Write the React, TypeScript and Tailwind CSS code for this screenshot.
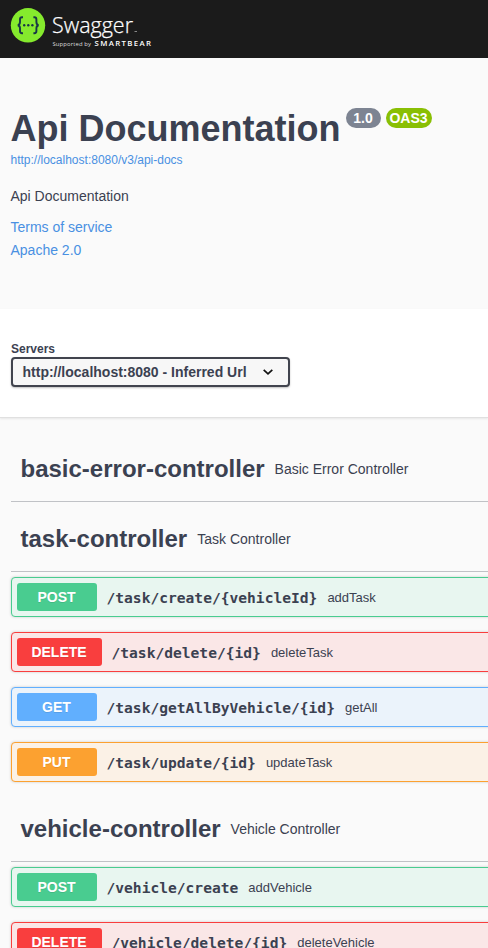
const sans = 'font-["Liberation_Sans",Arial,sans-serif]';
const mono = 'font-["DejaVu_Sans_Mono",monospace]';

type Method = 'POST' | 'DELETE' | 'GET' | 'PUT';

const styles: Record<Method, { row: string; badge: string }> = {
  POST: { row: 'border-[#49cc90] bg-[#e8f6f0]', badge: 'bg-[#49cc90] w-20' },
  DELETE: { row: 'border-[#f93e3e] bg-[#fae7e7]', badge: 'bg-[#f93e3e] w-[85px]' },
  GET: { row: 'border-[#61affe] bg-[#ebf3fb]', badge: 'bg-[#61affe] w-20' },
  PUT: { row: 'border-[#fca130] bg-[#fbf1e6]', badge: 'bg-[#fca130] w-20' },
};

function Operation({ method, path, summary }: { method: Method; path: string; summary: string }) {
  const s = styles[method];
  return (
    <div className={`mb-[15px] flex h-10 w-[600px] items-center rounded border px-[5px] shadow-[0_0_3px_rgba(0,0,0,0.19)] ${s.row}`}>
      <span
        className={`flex h-7 shrink-0 items-center justify-center rounded-[3px] pr-px text-sm font-bold text-white [text-shadow:0_1px_0_rgba(0,0,0,0.1)] ${s.badge}`}
      >
        {method}
      </span>
      <span className={`ml-[9.5px] whitespace-nowrap pt-0.5 text-[14.6px] leading-5 font-bold ${mono}`}>{path}</span>
      <span className="ml-2.5 whitespace-nowrap pt-0.5 text-[13px] leading-5">{summary}</span>
    </div>
  );
}

function Tag({ name, description }: { name: string; description: string }) {
  return (
    <h3 className="mb-[5px] flex h-[65px] items-center border-b border-[#3b4151]/30 pl-[9.5px]">
      <span className="text-2xl leading-8 font-bold">{name}</span>
      <span className="ml-2.5 text-sm">{description}</span>
    </h3>
  );
}

function Logo() {
  return (
    <svg width="160" height="58" viewBox="0 0 160 58" className="block">
      <circle cx="28" cy="25.3" r="17.2" fill="#85ea2d" />
      <g fill="none" stroke="#173647" strokeWidth="1.9">
        <path d="M23 17.2h-1c-1.5 0-2 .8-2 2.2v2.7c0 1.9-.5 2.8-2.2 3.1 1.7.3 2.2 1.2 2.2 3.1V31c0 1.4.5 2.2 2 2.2h1" />
        <path d="M33.4 17.2h1c1.5 0 2 .8 2 2.2v2.7c0 1.9.5 2.8 2.2 3.1-1.7.3-2.2 1.2-2.2 3.1V31c0 1.4-.5 2.2-2 2.2h-1" />
      </g>
      <g fill="#173647">
        <circle cx="24.2" cy="25.2" r="1.2" />
        <circle cx="28.3" cy="25.2" r="1.2" />
        <circle cx="32.4" cy="25.2" r="1.2" />
      </g>
      <text x="52" y="32.5" textLength="81" lengthAdjust="spacingAndGlyphs" fill="#fff" fontFamily="Open Sans" fontWeight="300" fontSize="22.5" stroke="#fff" strokeWidth="0.25">
        Swagger
      </text>
      <path d="M134.5 31.5h2.5" stroke="#888" strokeWidth="1" />
      <text x="52.5" y="46" textLength="38.5" fill="#ddd" fontFamily="Open Sans" fontSize="5.9">
        Supported by
      </text>
      <text x="94.5" y="45.8" textLength="56.5" fill="#fff" fontFamily="Open Sans" fontWeight="600" fontSize="7.8">
        SMARTBEAR
      </text>
    </svg>
  );
}

export default function App() {
  return (
    <div className={`h-[948px] w-[488px] overflow-hidden bg-[#fafafa] text-[#3b4151] ${sans}`}>
      <header className="h-[58px] bg-[#1b1b1b]">
        <Logo />
      </header>
      <section className="h-[251px] pt-[50px] pl-[10.5px]">
        <div className="flex h-10 items-start">
          <h2 className="mt-px text-[36px] leading-10 font-bold">Api Documentation</h2>
          <span className="ml-[5px] flex h-5 w-[35px] items-center justify-center rounded-full bg-[#7d8492] text-sm font-bold text-white">1.0</span>
          <span className="ml-[5px] flex h-5 w-[46px] items-center justify-center rounded-full bg-[#89bf04] text-sm font-bold text-white">OAS3</span>
        </div>
        <a className="mt-1 block text-xs leading-4 text-[#4990e2]">http://localhost:8080/v3/api-docs</a>
        <p className="mt-[18px] text-sm leading-5">Api Documentation</p>
        <a className="mt-[11px] block text-sm leading-5 text-[#4990e2]">Terms of service</a>
        <a className="mt-[3px] block text-sm leading-5 text-[#4990e2]">Apache 2.0</a>
      </section>
      <section className="h-[109px] border-b border-[#e0e0e0] bg-white pt-8 pl-[11px] shadow-[0_1px_2px_rgba(0,0,0,0.08)]">
        <label className="block text-xs leading-4 font-bold">Servers</label>
        <div className="flex h-[30px] w-[279px] items-center justify-between rounded border-2 border-[#41444e] bg-[#f7f7f7] pr-[15px] pl-[9.5px] shadow-[0_1px_2px_rgba(0,0,0,0.25)]">
          <span className="text-sm font-bold">http://localhost:8080 - Inferred Url</span>
          <svg width="10" height="6" viewBox="0 0 10 6" fill="none" stroke="#111" strokeWidth="1.7">
            <path d="M.7.8L5 4.8 9.3.8" />
          </svg>
        </div>
      </section>
      <main className="pt-[19px] pl-[11px]">
        <Tag name="basic-error-controller" description="Basic Error Controller" />
        <Tag name="task-controller" description="Task Controller" />
        <Operation method="POST" path="/task/create/{vehicleId}" summary="addTask" />
        <Operation method="DELETE" path="/task/delete/{id}" summary="deleteTask" />
        <Operation method="GET" path="/task/getAllByVehicle/{id}" summary="getAll" />
        <Operation method="PUT" path="/task/update/{id}" summary="updateTask" />
        <Tag name="vehicle-controller" description="Vehicle Controller" />
        <Operation method="POST" path="/vehicle/create" summary="addVehicle" />
        <Operation method="DELETE" path="/vehicle/delete/{id}" summary="deleteVehicle" />
      </main>
    </div>
  );
}
